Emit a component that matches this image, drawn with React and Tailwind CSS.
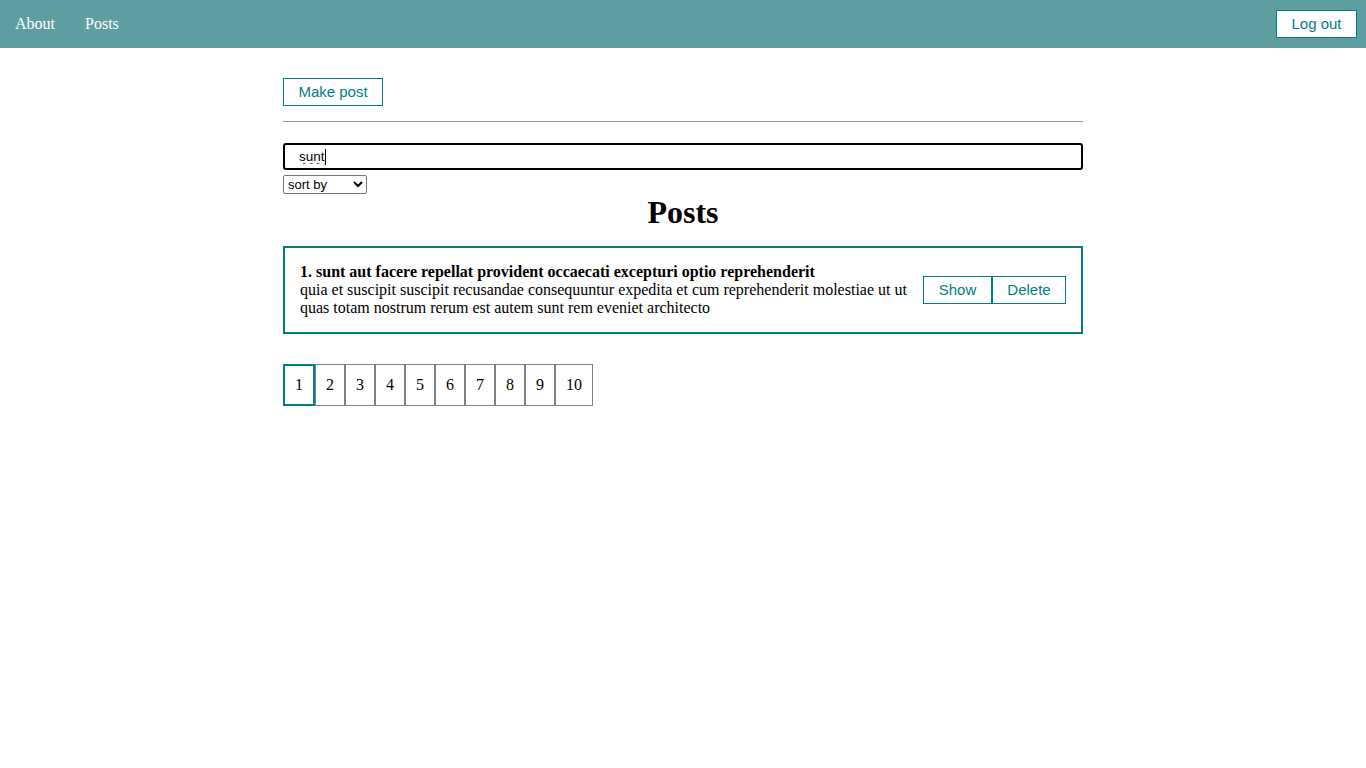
import React from "react";

export default function App() {
  const pages = [1, 2, 3, 4, 5, 6, 7, 8, 9, 10];
  return (
    <div className="min-h-screen bg-white" style={{ fontFamily: '"Liberation Serif", serif' }}>
      <div className="h-[48px] bg-[#5f9ea0] flex items-center justify-between pl-[15px] pr-[9px]">
        <div className="flex gap-[30px] text-white text-[16px]">
          <a className="cursor-pointer">About</a>
          <a className="cursor-pointer">Posts</a>
        </div>
        <button className="h-[28px] w-[81px] bg-white border border-[#008080] text-[#008080] text-[15px] flex items-center justify-center" style={{ fontFamily: '"Liberation Sans", sans-serif' }}>
          Log out
        </button>
      </div>

      <div className="w-[800px] mx-auto">
        <button className="mt-[30px] h-[28px] w-[100px] bg-white border border-[#008080] text-[#008080] text-[15px] flex items-center justify-center" style={{ fontFamily: '"Liberation Sans", sans-serif' }}>
          Make post
        </button>
        <div className="mt-[15px] h-0 border-t border-[#9a9a9a]" />
        <div className="mt-[21px] relative">
          <input
            readOnly
            value="sunt"
            className="block w-[800px] h-[27px] border-2 border-black rounded-[3px] px-[14px] text-[13.5px] text-black outline-none underline decoration-wavy decoration-red-600 decoration-1"
            style={{ fontFamily: '"Liberation Sans", sans-serif' }}
          />
          <span className="absolute left-[42px] top-[6px] w-px h-[16px] bg-black" />
        </div>
        <select
          className="mt-[5px] block w-[84px] h-[19px] border border-[#767676] rounded-[2px] text-[13px] text-black bg-white"
          style={{ fontFamily: '"Liberation Sans", sans-serif' }}
          defaultValue=""
        >
          <option value="" disabled>sort by</option>
          <option>title</option>
          <option>body</option>
        </select>
        <h1 className="text-center text-[32px] font-bold leading-[37px] text-black">Posts</h1>

        <div className="mt-[15px] border-2 border-[#008080] p-[15px] flex items-center justify-between">
          <div className="text-[16px] leading-[18px] text-black">
            <strong>1. sunt aut facere repellat provident occaecati excepturi optio reprehenderit</strong>
            <div>
              quia et suscipit suscipit recusandae consequuntur expedita et cum reprehenderit molestiae ut ut quas totam nostrum rerum est autem sunt rem eveniet architecto
            </div>
          </div>
          <div className="flex shrink-0" style={{ fontFamily: '"Liberation Sans", sans-serif' }}>
            <button className="h-[28px] w-[69px] bg-white border border-[#008080] text-[#008080] text-[15px] flex items-center justify-center">Show</button>
            <button className="h-[28px] w-[74px] bg-white border border-[#008080] text-[#008080] text-[15px] flex items-center justify-center">Delete</button>
          </div>
        </div>

        <div className="mt-[30px] flex">
          {pages.map((p) => (
            <span
              key={p}
              className={
                p === 1
                  ? "h-[42px] px-[10px] border-2 border-[#008080] flex items-center text-[16px] text-black"
                  : "h-[42px] px-[10px] border border-[#808080] flex items-center text-[16px] text-black"
              }
            >
              {p}
            </span>
          ))}
        </div>
      </div>
    </div>
  );
}
